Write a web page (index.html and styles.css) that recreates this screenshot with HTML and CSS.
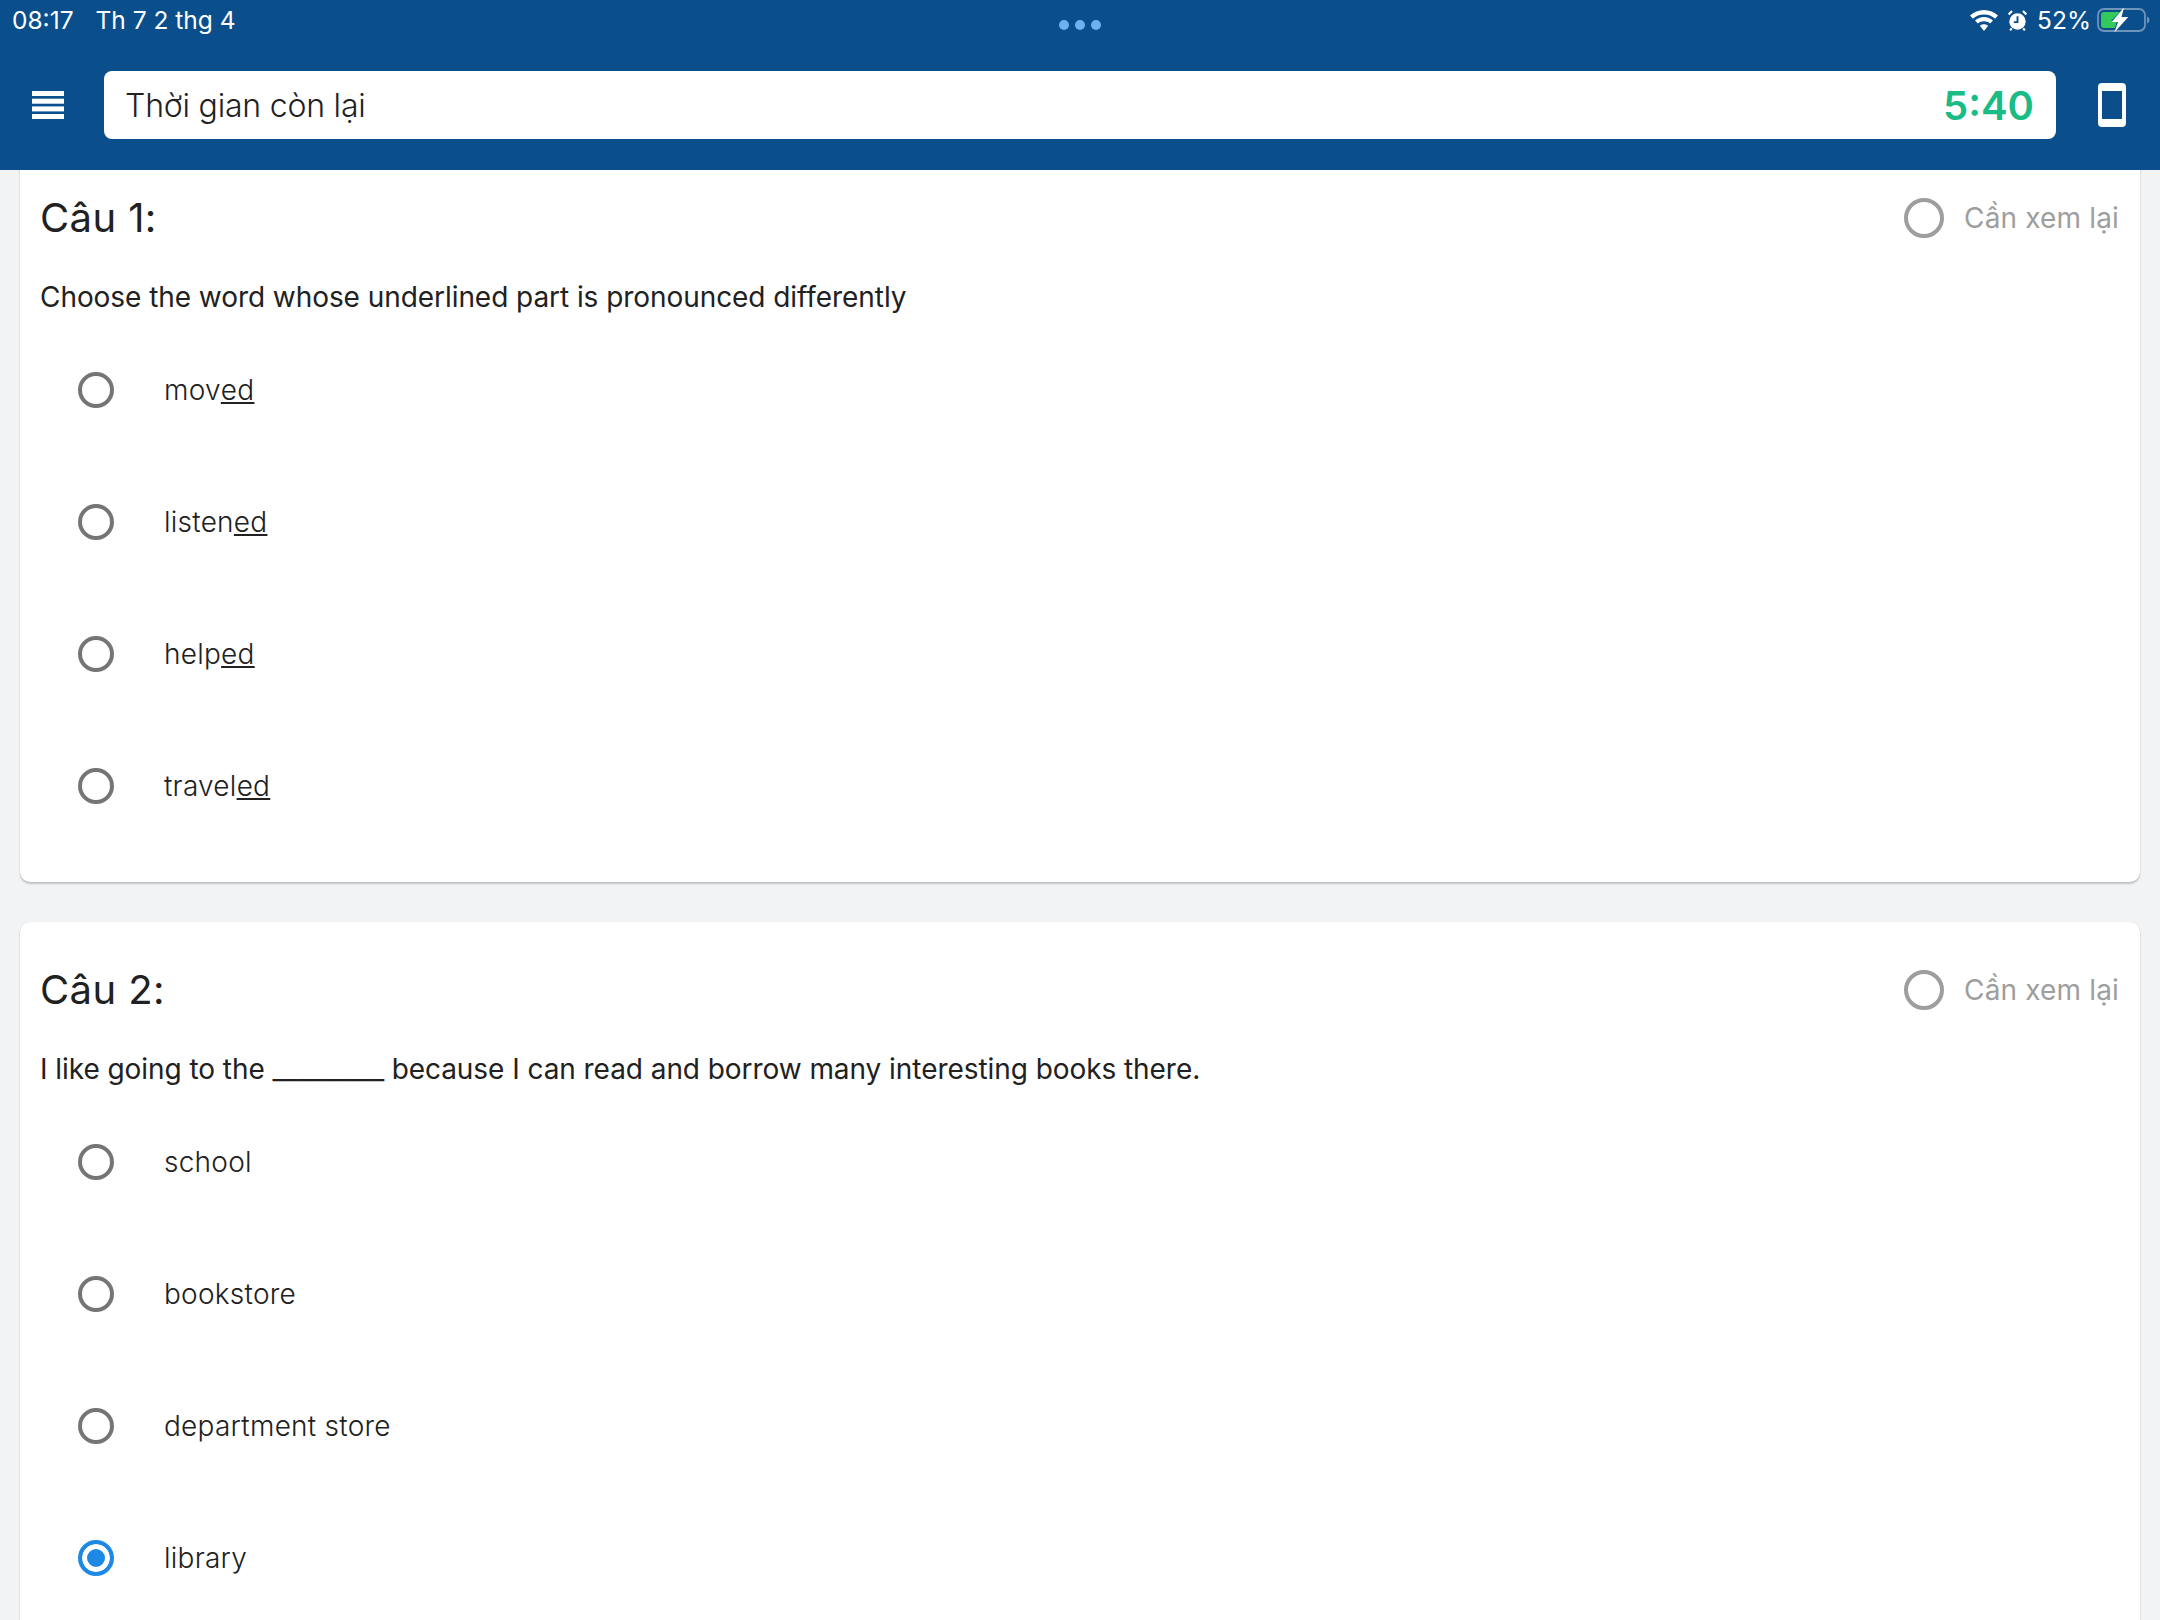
FILE: index.html
```html
<!doctype html>
<html>
  <head>
    <title>Bài thi</title>
    <meta charset="utf-8">
    <link rel="stylesheet" href="styles.css">
  </head>
  <body>
    <header class="app-header">
      <div class="status-bar">
        <div class="status-left">
          <span>08:17</span>
          <span>Th 7 2 thg 4</span>
        </div>
        <div class="status-dots"><i></i><i></i><i></i></div>
        <div class="status-right">
          <svg class="icon-wifi" viewBox="2 1 24 18" fill="#fff">
            <path d="M14 4.8c3.800 0 7 1.300 9.500 3.600l2.500-2.600C22.800 2.800 18.600 1 14 1S5.200 2.800 2 5.800l2.500 2.600C7 6.100 10.200 4.800 14 4.800z"/>
            <path d="M14 10.600c2 0 3.800.7 5.200 2l2.500-2.600C19.600 8.100 16.900 7 14 7s-5.600 1.100-7.700 3l2.500 2.600c1.400-1.300 3.200-2 5.200-2z"/>
            <path d="M14 13.200c-1.400 0-2.700.5-3.600 1.400L14 19l3.600-4.400c-.9-.9-2.200-1.400-3.600-1.400z"/>
          </svg>
          <svg class="icon-alarm" viewBox="0 0 18 20">
            <circle cx="9" cy="11" r="7.800" fill="#fff"/>
            <path d="M9 6v5.500H5.500" fill="none" stroke="#0a4f8c" stroke-width="1.800"/>
            <path d="M.6 4.200 3.800 1M17.400 4.200 14.200 1M3.500 17.500 2 19.400M14.500 17.500 16 19.400" stroke="#fff" stroke-width="2" fill="none"/>
          </svg>
          <span class="battery-pct">52%</span>
          <svg class="icon-battery" viewBox="0 0 53 26">
            <rect x="1" y="2" width="47" height="22" rx="6" fill="none" stroke="#6f94b8" stroke-width="1.800"/>
            <path d="M50 9.500c1.500.5 2.500 2 2.500 3.500s-1 3-2.500 3.500z" fill="#6f94b8"/>
            <path d="M7 5h16l-9 9h6l-2 7H7a3 3 0 0 1-3-3V8a3 3 0 0 1 3-3z" fill="#34c759"/>
            <path d="M27 .5 14.700 15h6.300l-3.700 10.500L31.300 10h-6.800z" fill="#fff"/>
          </svg>
        </div>
      </div>
      <div class="toolbar">
        <svg class="icon-menu" viewBox="0 0 32 28" fill="#fff">
          <rect y="0" width="32" height="5"/>
          <rect y="7.700" width="32" height="5"/>
          <rect y="15.400" width="32" height="5"/>
          <rect y="23" width="32" height="5"/>
        </svg>
        <div class="timer-box">
          <span class="timer-label">Thời gian còn lại</span>
          <span class="timer-value">5:40</span>
        </div>
        <div class="icon-phone"></div>
      </div>
    </header>

    <main class="questions">
      <section class="card">
        <div class="card-head">
          <h2>Câu 1:</h2>
          <div class="review"><span class="review-radio"></span>Cần xem lại</div>
        </div>
        <p class="question">Choose the word whose underlined part is pronounced differently</p>
        <ul class="options">
          <li><span class="radio"></span>mov<u>ed</u></li>
          <li><span class="radio"></span>listen<u>ed</u></li>
          <li><span class="radio"></span>help<u>ed</u></li>
          <li><span class="radio"></span>travel<u>ed</u></li>
        </ul>
      </section>

      <section class="card">
        <div class="card-head">
          <h2>Câu 2:</h2>
          <div class="review"><span class="review-radio"></span>Cần xem lại</div>
        </div>
        <p class="question">I like going to the <span class="blank">_________</span> because I can read and borrow many interesting books there.</p>
        <ul class="options">
          <li><span class="radio"></span>school</li>
          <li><span class="radio"></span>bookstore</li>
          <li><span class="radio"></span>department store</li>
          <li><span class="radio checked"></span>library</li>
        </ul>
      </section>
    </main>
  </body>
</html>
```

FILE: styles.css
```css
* {
  margin: 0;
  padding: 0;
  box-sizing: border-box;
}

html, body {
  height: 100%;
  overflow: hidden;
}

body {
  background-color: #f2f3f5;
  color: #212121;
  font-family: Inter, "Noto Sans", sans-serif;
}

.app-header {
  position: relative;
  z-index: 2;
  height: 170px;
  background-color: #0a4f8c;
  color: #fff;
}

.status-bar {
  height: 40px;
  padding: 0 10px 0 12px;
  display: flex;
  align-items: center;
  justify-content: space-between;
  font-size: 24.5px;
}

.status-left {
  display: flex;
  gap: 22px;
}

.status-dots {
  position: absolute;
  top: 20px;
  left: 1059px;
  display: flex;
  gap: 6px;
}

.status-dots i {
  width: 10px;
  height: 10px;
  border-radius: 50%;
  background-color: #6eb1f0;
}

.status-right {
  display: flex;
  align-items: center;
}

.icon-wifi {
  width: 28px;
  height: 21px;
  margin-right: 10px;
}

.icon-alarm {
  width: 19px;
  height: 21px;
  margin-right: 10px;
}

.battery-pct {
  margin-right: 6px;
}

.icon-battery {
  width: 53px;
  height: 26px;
}

.toolbar {
  height: 130px;
  padding: 31px 34px 31px 32px;
  display: flex;
  align-items: center;
}

.icon-menu {
  width: 32px;
  height: 28px;
  margin-right: 40px;
}

.timer-box {
  flex: 1;
  height: 68px;
  padding: 0 22px 0 21px;
  display: flex;
  align-items: center;
  justify-content: space-between;
  border-radius: 8px;
  background-color: #fff;
}

.timer-label {
  color: #212121;
  font-size: 32px;
  font-weight: 300;
  letter-spacing: -0.2px;
}

.timer-value {
  color: #1abc85;
  font-size: 40px;
  font-weight: 600;
}

.icon-phone {
  width: 28px;
  height: 44px;
  margin-left: 42px;
  border: solid #fff;
  border-width: 8px 4px;
  border-radius: 4px;
}

.questions {
  margin-top: -20px;
  padding: 0 20px;
  display: flex;
  flex-direction: column;
  gap: 40px;
}

.card {
  padding: 40px 20px 30px;
  border-radius: 10px;
  background-color: #fff;
  box-shadow: 0 2px 2px rgba(0, 0, 0, 0.2), 0 0 1px rgba(0, 0, 0, 0.15);
}

.card-head {
  height: 56px;
  display: flex;
  align-items: center;
  justify-content: space-between;
}

.card-head h2 {
  font-size: 40px;
  font-weight: 400;
  letter-spacing: 0.4px;
  line-height: 54px;
}

.review {
  display: flex;
  align-items: center;
  gap: 20px;
  padding-right: 1px;
  color: #9e9e9e;
  font-size: 28px;
  letter-spacing: 0.15px;
}

.review-radio {
  width: 40px;
  height: 40px;
  border: 4px solid #9e9e9e;
  border-radius: 50%;
}

.question {
  margin: 36px 0 12px;
  font-size: 28px;
  line-height: 30px;
  letter-spacing: -0.06px;
}

.blank {
  letter-spacing: -0.4px;
}

.options {
  list-style: none;
}

.options li {
  height: 132px;
  padding-left: 38px;
  display: flex;
  align-items: center;
  font-size: 28px;
  font-weight: 300;
  letter-spacing: 0.25px;
  white-space: pre;
}

.radio {
  width: 36px;
  height: 36px;
  margin-right: 50px;
  border: 4px solid #757575;
  border-radius: 50%;
}

.radio.checked {
  border-color: #1e88e5;
  background-color: #1e88e5;
  box-shadow: inset 0 0 0 5px #fff;
}
```
